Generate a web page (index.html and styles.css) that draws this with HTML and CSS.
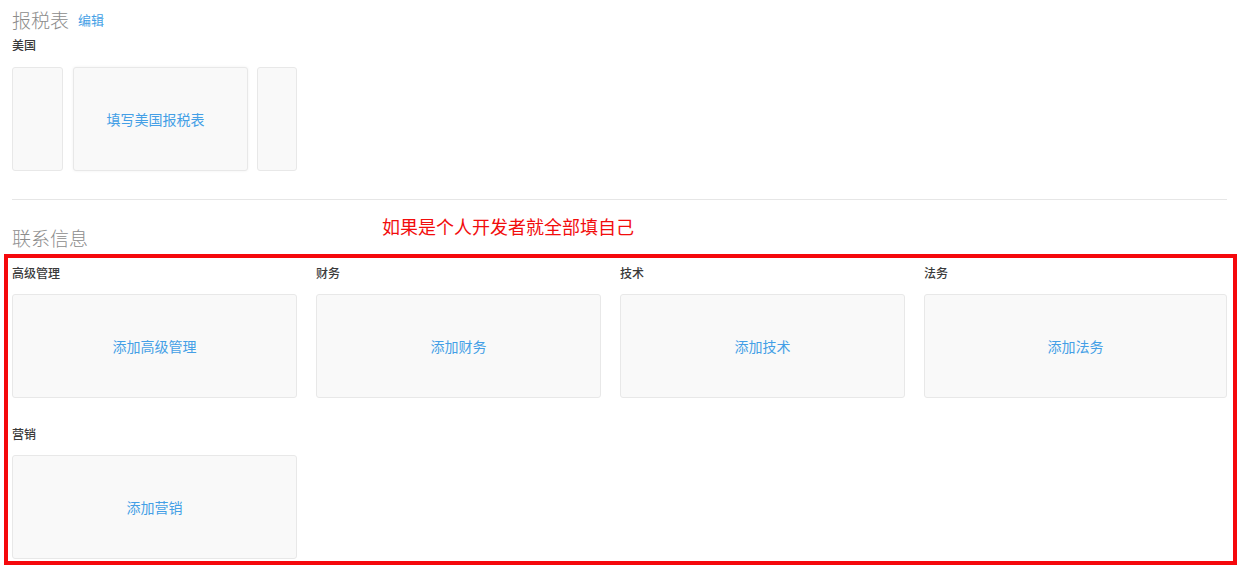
FILE: index.html
```html
<!DOCTYPE html>
<html lang="zh-CN">
<head>
    <meta charset="UTF-8">
    <meta name="viewport" content="width=device-width, initial-scale=1.0">
    <title>报税表与联系信息</title>
    <link rel="stylesheet" href="styles.css">
</head>
<body>
    <div class="page">
        <div class="section-head">
            <h2>报税表</h2>
            <a href="#" class="edit-link">编辑</a>
        </div>
        <div class="field-label">美国</div>
        <div class="tax-carousel">
            <div class="card card-side-left"></div>
            <div class="card card-main"><a href="#">填写美国报税表</a></div>
            <div class="card card-side-right"></div>
        </div>

        <hr class="divider">

        <div class="section-head">
            <h2>联系信息</h2>
        </div>
        <div class="contact-grid">
            <div class="contact-item">
                <div class="field-label">高级管理</div>
                <div class="card"><a href="#">添加高级管理</a></div>
            </div>
            <div class="contact-item">
                <div class="field-label">财务</div>
                <div class="card"><a href="#">添加财务</a></div>
            </div>
            <div class="contact-item">
                <div class="field-label">技术</div>
                <div class="card"><a href="#">添加技术</a></div>
            </div>
            <div class="contact-item">
                <div class="field-label">法务</div>
                <div class="card"><a href="#">添加法务</a></div>
            </div>
            <div class="contact-item">
                <div class="field-label">营销</div>
                <div class="card"><a href="#">添加营销</a></div>
            </div>
        </div>
    </div>

    <!-- annotation drawn over the screenshot -->
    <div class="note-text">如果是个人开发者就全部填自己</div>
    <div class="note-box"></div>
</body>
</html>
```

FILE: styles.css
```css
body {
    margin: 0;
    font-family: "Noto Sans CJK SC", "Noto Sans", sans-serif;
    background-color: #fff;
    color: #333;
}

a {
    color: #449fe6;
    text-decoration: none;
}

.page {
    width: 1215px;
    padding: 5px 0 0 12px;
}

.section-head {
    display: flex;
    align-items: center;
    gap: 9px;
}

.section-head h2 {
    margin: 0;
    font-size: 19px;
    line-height: 28px;
    font-weight: 300;
    color: #8c8c8c;
}

.edit-link {
    font-size: 13px;
    line-height: 28px;
    padding-top: 1px;
}

.field-label {
    margin-top: 2px;
    font-size: 12px;
    line-height: 18px;
    font-weight: 500;
    color: #3a3a3a;
}

.card {
    height: 104px;
    box-sizing: border-box;
    background-color: #f9f9f9;
    border: 1px solid #e8e8e8;
    border-radius: 3px;
    display: flex;
    align-items: center;
    justify-content: center;
    font-size: 14px;
}

.tax-carousel {
    display: flex;
    margin-top: 13px;
}

.card-side-left {
    width: 51px;
    margin-right: 10px;
}

.card-main {
    width: 175px;
    margin-right: 9px;
    padding-right: 10px;
    box-shadow: 0 0 3px rgba(0, 0, 0, 0.06);
}

.card-side-right {
    width: 40px;
}

.divider {
    margin: 28px 0 0;
    border: none;
    border-top: 1px solid #e6e6e6;
}

.divider + .section-head {
    margin-top: 24px;
}

.contact-grid {
    display: grid;
    grid-template-columns: 285px 285px 285px 1fr;
    column-gap: 19px;
    row-gap: 27px;
    margin-top: 12px;
}

.contact-item .field-label {
    margin-top: 0;
}

.contact-item .card {
    margin-top: 12px;
}

.note-text {
    position: absolute;
    left: 382px;
    top: 213px;
    font-size: 18px;
    line-height: 26px;
    color: #f20d0d;
}

.note-box {
    position: absolute;
    left: 4px;
    top: 254px;
    width: 1233px;
    height: 311px;
    box-sizing: border-box;
    border: 4px solid #f5080c;
}
```
